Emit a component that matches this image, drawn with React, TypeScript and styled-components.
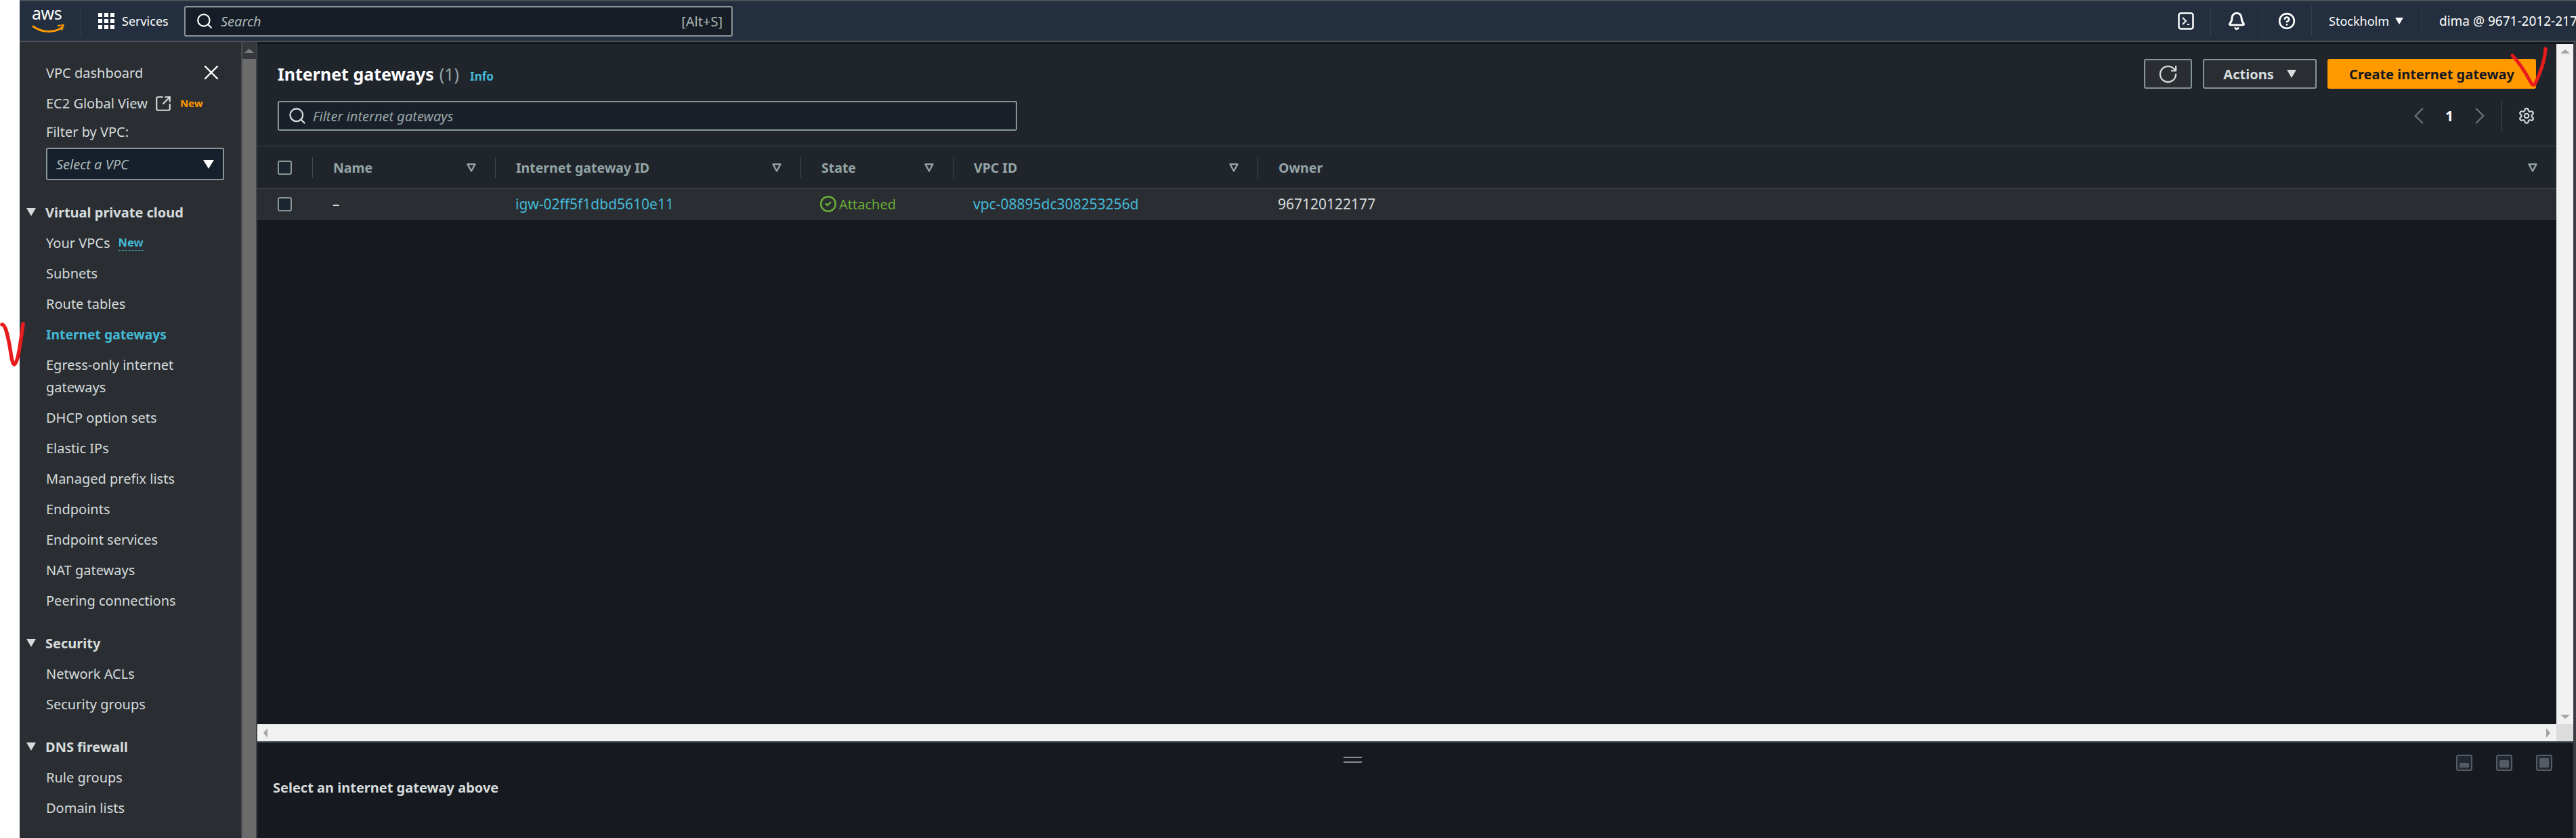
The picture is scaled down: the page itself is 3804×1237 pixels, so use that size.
import React from 'react';
import styled, { createGlobalStyle } from 'styled-components';
import { Bell, ChevronLeft, ChevronRight, CircleCheck, CircleHelp, RotateCw, Search, Settings, SquareArrowOutUpRight, X } from 'lucide-react';

const GlobalStyle = createGlobalStyle`
  html, body {
    margin: 0;
    padding: 0;
    background: #fff;
  }
  body {
    font-family: "Noto Sans", "Open Sans", Arial, sans-serif;
    font-size: 20px;
    color: #d5dbdb;
    overflow: hidden;
  }
  * {
    box-sizing: border-box;
  }
`;

const Page = styled.div`
  position: relative;
  display: flex;
  width: 3804px;
  height: 1237px;
  overflow: hidden;
  background: #fff;
`;

const Gutter = styled.div`
  width: 29px;
  flex: none;
`;

const Shell = styled.div`
  flex: 1;
  min-width: 0;
  display: flex;
  flex-direction: column;
`;

const Header = styled.header`
  height: 62px;
  flex: none;
  display: flex;
  align-items: center;
  background: #232f3e;
  border-top: 2px solid #4a4f56;
  border-bottom: 2px solid #4a4f56;
  overflow: hidden;
`;

const LogoCell = styled.div`
  width: 91px;
  flex: none;
  height: 44px;
  border-right: 1px solid #36424f;
  padding-left: 18px;
`;

const LogoWord = styled.div`
  color: #fff;
  font-size: 25px;
  line-height: 20px;
  height: 20px;
  letter-spacing: -0.5px;
`;

const ServicesCell = styled.div`
  width: 152px;
  flex: none;
  display: flex;
  align-items: center;
  gap: 11px;
  padding-left: 25px;
  font-size: 18px;
  color: #fff;
`;

const SearchBox = styled.div`
  width: 810px;
  height: 45px;
  flex: none;
  display: flex;
  align-items: center;
  gap: 11px;
  padding: 0 13px 0 15px;
  background: #161d26;
  border: 2px solid #879596;
  border-radius: 3px;
  color: #aab7b8;
  font-size: 20px;
`;

const SearchHint = styled.span`
  font-style: italic;
  flex: 1;
`;

const Spacer = styled.div`
  flex: 1;
`;

const HeaderCell = styled.div<{ $width: number }>`
  width: ${p => p.$width}px;
  flex: none;
  height: 44px;
  display: flex;
  align-items: center;
  justify-content: center;
  color: #fff;
  font-size: 19px;
  white-space: nowrap;
  & + & {
    border-left: 1px solid #36424f;
  }
`;

const RegionCell = styled(HeaderCell)`
  justify-content: flex-start;
  gap: 9px;
  padding-left: 25px;
  font-size: 18px;
`;

const AccountCell = styled(HeaderCell)`
  justify-content: flex-start;
  padding-left: 25px;
  overflow: hidden;
`;

const Body = styled.div`
  flex: 1;
  min-height: 0;
  display: flex;
`;

const Sidebar = styled.aside`
  width: 351px;
  flex: none;
  display: flex;
  background: #2a2e33;
`;

const SideNav = styled.nav`
  flex: 1;
  min-width: 0;
  padding: 23px 0 0 39px;
  font-size: 20px;
`;

const SideScroll = styled.div`
  width: 24px;
  flex: none;
  display: flex;
  flex-direction: column;
  align-items: center;
  background: #6b6b6b;
  border-left: 2px solid #4a4d52;
  border-right: 2px solid #3f4247;
`;

const SideScrollCap = styled.div`
  width: 100%;
  height: 25px;
  display: flex;
  align-items: center;
  justify-content: center;
  background: #35383d;
`;

const NavRow = styled.div<{ $active?: boolean }>`
  position: relative;
  min-height: 45px;
  padding: 6px 0;
  line-height: 33px;
  width: 250px;
  display: flex;
  align-items: center;
  gap: 12px;
  color: ${p => (p.$active ? '#44b9d6' : '#d5dbdb')};
  font-weight: ${p => (p.$active ? 700 : 400)};
  font-size: ${p => (p.$active ? '19.3px' : '20px')};
`;

const ExternalIcon = styled(SquareArrowOutUpRight)`
  margin-left: -2px;
  flex: none;
`;

const NewOrange = styled.span`
  color: #ff9900;
  font-size: 15px;
  font-weight: 700;
`;

const NewBlue = styled.span`
  color: #44b9d6;
  font-size: 16.5px;
  font-weight: 700;
  border-bottom: 1px dashed #44b9d6;
  line-height: 22px;
`;

const CloseIcon = styled.div`
  position: absolute;
  right: -12px;
  top: 4px;
  display: flex;
  color: #fff;
`;

const FilterLabel = styled.div`
  height: 40px;
  line-height: 40px;
`;

const VpcSelect = styled.div`
  width: 263px;
  height: 48px;
  margin: 3px 0 24px;
  padding: 0 13px;
  display: flex;
  align-items: center;
  justify-content: space-between;
  background: #16202c;
  border: 2px solid #879596;
  border-radius: 3px;
  color: #aab7b8;
  font-style: italic;
`;

const Section = styled.div`
  & + & {
    margin-top: 17px;
  }
`;

const SectionHead = styled.div`
  height: 46px;
  display: flex;
  align-items: center;
  gap: 14px;
  margin-left: -29px;
  font-weight: 700;
`;

const Main = styled.main`
  flex: 1;
  min-width: 0;
  display: flex;
  flex-direction: column;
  background: #16191f;
  border-right: 4px solid #3a3d42;
`;

const UpperPane = styled.div`
  height: 1034px;
  flex: none;
  display: flex;
  flex-direction: column;
  padding-top: 3px;
  border-bottom: 2px solid #555a63;
`;

const UpperRow = styled.div`
  flex: 1;
  min-height: 0;
  display: flex;
`;

const Content = styled.div`
  flex: 1;
  min-width: 0;
  display: flex;
  flex-direction: column;
`;

const ToolPanel = styled.div`
  height: 151px;
  flex: none;
  padding: 22px 30px 0 30px;
  display: flex;
  flex-direction: column;
  background: #20252c;
  border-bottom: 1px solid #414750;
`;

const ToolTop = styled.div`
  height: 44px;
  display: flex;
  align-items: center;
  gap: 16px;
`;

const Title = styled.h1`
  flex: 1;
  margin: 0;
  font-size: 25px;
  font-weight: 700;
  color: #fff;
  display: flex;
  align-items: baseline;
  gap: 8px;
`;

const Count = styled.span`
  font-weight: 400;
  color: #95a5a6;
`;

const InfoLink = styled.a`
  margin-left: 8px;
  font-size: 17px;
  font-weight: 700;
  color: #44b9d6;
`;

const ToolButton = styled.button`
  height: 44px;
  display: flex;
  align-items: center;
  justify-content: center;
  gap: 19px;
  background: #2a2e33;
  border: 2px solid #879596;
  border-radius: 3px;
  color: #d5dbdb;
  font: 700 20px "Noto Sans", sans-serif;
`;

const RefreshButton = styled(ToolButton)`
  width: 71px;
`;

const ActionsButton = styled(ToolButton)`
  width: 168px;
`;

const CreateButton = styled.button`
  width: 308px;
  height: 44px;
  background: #ff9900;
  border: none;
  border-radius: 3px;
  color: #16191f;
  font: 700 20px "Noto Sans", sans-serif;
`;

const ToolBottom = styled.div`
  height: 44px;
  margin-top: 18px;
  display: flex;
  align-items: center;
`;

const FilterBox = styled.div`
  width: 1092px;
  height: 44px;
  display: flex;
  align-items: center;
  gap: 9px;
  padding: 0 13px;
  background: #1a2029;
  border: 2px solid #879596;
  border-radius: 3px;
  color: #95a5a6;
  font-style: italic;
  font-size: 20px;
`;

const Pager = styled.div`
  margin-left: auto;
  height: 44px;
  display: flex;
  align-items: center;
  color: #fff;
  font-weight: 700;
  font-size: 21px;
`;

const PagerNum = styled.span`
  width: 48px;
  text-align: center;
`;

const PagerSettings = styled.div`
  width: 52px;
  height: 44px;
  margin-left: 10px;
  padding-left: 24px;
  display: flex;
  align-items: center;
  border-left: 1px solid #414750;
  color: #d5dbdb;
`;

const grid = `
  display: grid;
  grid-template-columns: 81px 270px 451px 225px 450px 1fr;
`;

const TableHead = styled.div`
  ${grid}
  height: 63px;
  flex: none;
  align-items: center;
  background: #20252c;
  border-bottom: 1px solid #414750;
`;

const TableRow = styled.div`
  ${grid}
  height: 45px;
  flex: none;
  align-items: center;
  background: #2a2e33;
  border-bottom: 1px solid #414750;
  font-size: 21px;
`;

const CheckCell = styled.div`
  padding-left: 30px;
  display: flex;
`;

const CheckBox = styled.span`
  width: 21px;
  height: 21px;
  background: #1b2530;
  border: 2px solid #879596;
  border-radius: 3px;
`;

const HeadCell = styled.div`
  height: 31px;
  padding: 0 28px 0 30px;
  display: flex;
  align-items: center;
  justify-content: space-between;
  border-left: 1px solid #414750;
  color: #95a5a6;
  font-weight: 700;
  font-size: 19.5px;
`;

const BodyCell = styled.div`
  padding-left: 30px;
  display: flex;
  align-items: center;
  gap: 5px;
`;

const IdLink = styled.a`
  color: #44b9d6;
`;

const StatusText = styled.span`
  display: flex;
  align-items: center;
  gap: 3px;
  margin-left: -2px;
  color: #6aaf35;
  font-size: 20px;
`;

const VScroll = styled.div`
  width: 25px;
  flex: none;
  display: flex;
  flex-direction: column;
  align-items: center;
  justify-content: space-between;
  padding: 8px 0;
  background: #f1f1f1;
`;

const HScroll = styled.div`
  height: 25px;
  flex: none;
  display: flex;
  align-items: center;
  background: #f1f1f1;
`;

const HScrollTrack = styled.div`
  flex: 1;
  display: flex;
  align-items: center;
  justify-content: space-between;
  padding: 0 9px;
`;

const HScrollCorner = styled.div`
  width: 25px;
  height: 25px;
  flex: none;
  background: #dcdcdc;
`;

const ScrollArrow = styled.span<{ $dir: 'up' | 'down' | 'left' | 'right'; $color: string }>`
  width: 0;
  height: 0;
  border-style: solid;
  border-color: transparent;
  border-width: ${p => (p.$dir === 'up' || p.$dir === 'down' ? '6px 7px' : '7px 6px')};
  ${p => {
    const side = { up: 'bottom', down: 'top', left: 'right', right: 'left' }[p.$dir];
    const off = { up: 'top', down: 'bottom', left: 'left', right: 'right' }[p.$dir];
    return `border-${side}-color: ${p.$color}; border-${off}-width: 0;`;
  }}
`;

const Caret = styled.span<{ $color?: string; $size?: number }>`
  flex: none;
  width: 0;
  height: 0;
  border-style: solid;
  border-color: transparent;
  border-width: ${p => p.$size ?? 12}px ${p => (p.$size ?? 12) * 0.62}px 0;
  border-top-color: ${p => p.$color ?? '#d5dbdb'};
`;

const LowerPane = styled.div`
  position: relative;
  flex: 1;
  min-height: 0;
  padding-top: 54px;
  padding-left: 23px;
  font-weight: 700;
  font-size: 20px;
  line-height: 26px;
`;

const DragHandle = styled.div`
  position: absolute;
  top: 21px;
  left: 1604px;
  width: 27px;
  height: 9px;
  border-top: 2px solid #8a8a8a;
  border-bottom: 2px solid #8a8a8a;
`;

const PaneIcons = styled.div`
  position: absolute;
  top: 18px;
  right: 31px;
  display: flex;
  gap: 35px;
`;

const Annotation = styled.svg`
  position: absolute;
  pointer-events: none;
`;

const NoteLeft = styled(Annotation)`
  left: 0;
  top: 475px;
`;

const NoteRight = styled(Annotation)`
  left: 3707px;
  top: 69px;
`;

const SortArrow = () => (
  <svg width="14" height="13" viewBox="0 0 14 13">
    <path d="M1.5 1.5h11L7 11.5z" fill="none" stroke="#95a5a6" strokeWidth="2.4" strokeLinejoin="round" />
  </svg>
);

const PaneIcon = ({ fillY }: { fillY: number }) => (
  <svg width="24" height="24" viewBox="0 0 24 24">
    <rect x="1" y="1" width="22" height="22" rx="2" fill="#232830" stroke="#545b64" strokeWidth="2" />
    <rect x="5" y={fillY} width="14" height={19 - fillY} rx="1.5" fill="#545b64" />
  </svg>
);

const GridIcon = () => (
  <svg width="24" height="24" viewBox="0 0 24 24" fill="#fff">
    {[0, 9, 18].flatMap(y =>
      [0, 9, 18].map(x => <rect key={`${x}-${y}`} x={x} y={y} width="6" height="6" />)
    )}
  </svg>
);

const TerminalIcon = () => (
  <svg width="24" height="26" viewBox="0 0 24 26" fill="none" stroke="#fff" strokeWidth="2.5">
    <rect x="1.5" y="1.5" width="21" height="23" rx="3" />
    <path d="M7 8l5 5-5 5" strokeWidth="2" />
    <path d="M14 18h3" strokeWidth="2" />
  </svg>
);

const navMain = ['Subnets', 'Route tables'];
const navRest = ['DHCP option sets', 'Elastic IPs', 'Managed prefix lists', 'Endpoints', 'Endpoint services', 'NAT gateways', 'Peering connections'];

export default function App() {
  return (
    <Page>
      <GlobalStyle />
      <Gutter />
      <Shell>
        <Header>
          <LogoCell>
            <LogoWord>aws</LogoWord>
            <svg width="48" height="14" viewBox="0 0 48 14" fill="none">
              <path d="M2 3c12 9 30 10 42 2" stroke="#ff9900" strokeWidth="3" strokeLinecap="round" />
              <path d="M38 2l9-1-3 8" stroke="#ff9900" strokeWidth="2" strokeLinejoin="round" />
            </svg>
          </LogoCell>
          <ServicesCell>
            <GridIcon />
            Services
          </ServicesCell>
          <SearchBox>
            <Search size={26} color="#fff" strokeWidth={2} />
            <SearchHint>Search</SearchHint>
            <span>[Alt+S]</span>
          </SearchBox>
          <Spacer />
          <HeaderCell $width={72}><TerminalIcon /></HeaderCell>
          <HeaderCell $width={76}><Bell size={28} strokeWidth={2.5} /></HeaderCell>
          <HeaderCell $width={73}><CircleHelp size={26} strokeWidth={2.4} /></HeaderCell>
          <RegionCell $width={163}>Stockholm <Caret $color="#fff" $size={10} /></RegionCell>
          <AccountCell $width={228}>dima @ 9671-2012-2177</AccountCell>
        </Header>
        <Body>
          <Sidebar>
            <SideNav>
              <NavRow>
                VPC dashboard
                <CloseIcon><X size={36} strokeWidth={1.6} /></CloseIcon>
              </NavRow>
              <NavRow>
                <span>EC2 Global View</span>
                <ExternalIcon size={26} strokeWidth={2} />
                <NewOrange>New</NewOrange>
              </NavRow>
              <FilterLabel>Filter by VPC:</FilterLabel>
              <VpcSelect>
                Select a VPC
                <Caret $color="#fff" $size={13} />
              </VpcSelect>
              <Section>
                <SectionHead><Caret />Virtual private cloud</SectionHead>
                <NavRow>Your VPCs <NewBlue>New</NewBlue></NavRow>
                {navMain.map(item => <NavRow key={item}>{item}</NavRow>)}
                <NavRow $active>Internet gateways</NavRow>
                <NavRow>Egress-only internet gateways</NavRow>
                {navRest.map(item => <NavRow key={item}>{item}</NavRow>)}
              </Section>
              <Section>
                <SectionHead><Caret />Security</SectionHead>
                <NavRow>Network ACLs</NavRow>
                <NavRow>Security groups</NavRow>
              </Section>
              <Section>
                <SectionHead><Caret />DNS firewall</SectionHead>
                <NavRow>Rule groups</NavRow>
                <NavRow>Domain lists</NavRow>
              </Section>
            </SideNav>
            <SideScroll>
              <SideScrollCap><ScrollArrow $dir="up" $color="#7d7d7d" /></SideScrollCap>
            </SideScroll>
          </Sidebar>
          <Main>
            <UpperPane>
              <UpperRow>
                <Content>
                  <ToolPanel>
                    <ToolTop>
                      <Title>
                        Internet gateways <Count>(1)</Count>
                        <InfoLink>Info</InfoLink>
                      </Title>
                      <RefreshButton><RotateCw size={31} strokeWidth={1.7} /></RefreshButton>
                      <ActionsButton>Actions <Caret /></ActionsButton>
                      <CreateButton>Create internet gateway</CreateButton>
                    </ToolTop>
                    <ToolBottom>
                      <FilterBox>
                        <Search size={28} color="#d5dbdb" strokeWidth={2} />
                        Filter internet gateways
                      </FilterBox>
                      <Pager>
                        <ChevronLeft size={42} color="#6b737c" strokeWidth={1.3} />
                        <PagerNum>1</PagerNum>
                        <ChevronRight size={42} color="#6b737c" strokeWidth={1.3} />
                        <PagerSettings><Settings size={26} strokeWidth={2} /></PagerSettings>
                      </Pager>
                    </ToolBottom>
                  </ToolPanel>
                  <TableHead>
                    <CheckCell><CheckBox /></CheckCell>
                    <HeadCell>Name <SortArrow /></HeadCell>
                    <HeadCell>Internet gateway ID <SortArrow /></HeadCell>
                    <HeadCell>State <SortArrow /></HeadCell>
                    <HeadCell>VPC ID <SortArrow /></HeadCell>
                    <HeadCell>Owner <SortArrow /></HeadCell>
                  </TableHead>
                  <TableRow>
                    <CheckCell><CheckBox /></CheckCell>
                    <BodyCell>–</BodyCell>
                    <BodyCell><IdLink>igw-02ff5f1dbd5610e11</IdLink></BodyCell>
                    <BodyCell>
                      <StatusText>
                        <CircleCheck size={26} strokeWidth={2.3} />
                        Attached
                      </StatusText>
                    </BodyCell>
                    <BodyCell><IdLink>vpc-08895dc308253256d</IdLink></BodyCell>
                    <BodyCell>967120122177</BodyCell>
                  </TableRow>
                </Content>
                <VScroll>
                  <ScrollArrow $dir="up" $color="#a3a3a3" />
                  <ScrollArrow $dir="down" $color="#a3a3a3" />
                </VScroll>
              </UpperRow>
              <HScroll>
                <HScrollTrack>
                  <ScrollArrow $dir="left" $color="#a3a3a3" />
                  <ScrollArrow $dir="right" $color="#a3a3a3" />
                </HScrollTrack>
                <HScrollCorner />
              </HScroll>
            </UpperPane>
            <LowerPane>
              Select an internet gateway above
              <DragHandle />
              <PaneIcons>
                <PaneIcon fillY={12} />
                <PaneIcon fillY={8} />
                <PaneIcon fillY={5} />
              </PaneIcons>
            </LowerPane>
          </Main>
        </Body>
      </Shell>
      <NoteLeft width="38" height="68" viewBox="0 0 38 68" fill="none">
        <path d="M3 4c5 0 8 15 11 30 2 12 4 29 7 29 4 0 8-20 13-60" stroke="#e81c1c" strokeWidth="5.5" strokeLinecap="round" />
      </NoteLeft>
      <NoteRight width="56" height="62" viewBox="0 0 56 62" fill="none">
        <path d="M3 13c10 10 20 26 28 41 2 3 5 3 6 0 7-16 14-32 15-51" stroke="#e81c1c" strokeWidth="5" strokeLinecap="round" />
      </NoteRight>
    </Page>
  );
}
